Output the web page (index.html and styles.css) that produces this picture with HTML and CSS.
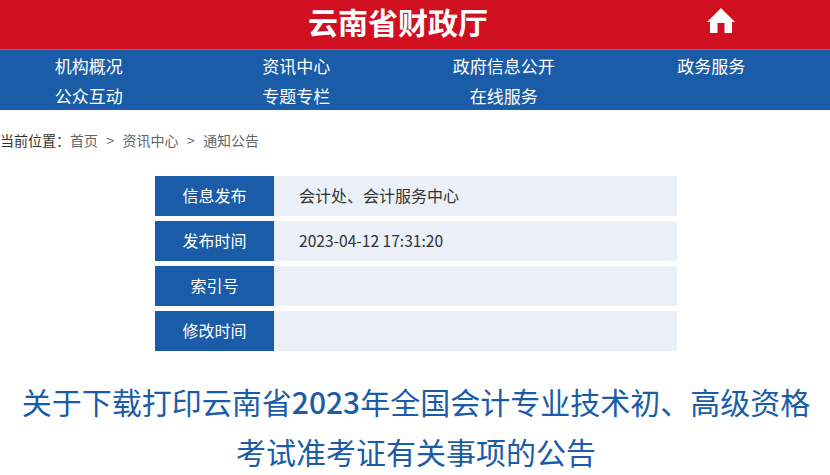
FILE: index.html
```html
<!DOCTYPE html>
<html lang="zh-CN">
<head>
<meta charset="utf-8">
<title>云南省财政厅</title>
<link rel="stylesheet" href="styles.css">
</head>
<body>
<header class="top">
  <div class="brand">云南省财政厅</div>
  <a class="home" href="#" aria-label="首页">
    <svg width="30" height="26" viewBox="0 0 30 26"><path fill="#fff" d="M15 0 L29 14 L26 14 L26 25 L18.5 25 L18.5 15 L11.5 15 L11.5 25 L4 25 L4 14 L1 14 Z"/></svg>
  </a>
</header>
<nav class="nav">
  <div class="nav-grid">
    <a href="#">机构概况</a>
    <a href="#">资讯中心</a>
    <a href="#">政府信息公开</a>
    <a href="#">政务服务</a>
    <a href="#">公众互动</a>
    <a href="#">专题专栏</a>
    <a href="#">在线服务</a>
  </div>
</nav>
<div class="crumbs">
  <span class="here">当前位置：</span><a href="#">首页</a><span class="sep">&gt;</span><a href="#">资讯中心</a><span class="sep">&gt;</span><a href="#">通知公告</a>
</div>
<section class="meta">
  <div class="row"><div class="label">信息发布</div><div class="value">会计处、会计服务中心</div></div>
  <div class="row"><div class="label">发布时间</div><div class="value time">2023-04-12 17:31:20</div></div>
  <div class="row"><div class="label">索引号</div><div class="value"></div></div>
  <div class="row"><div class="label">修改时间</div><div class="value"></div></div>
</section>
<h1 class="title">关于下载打印云南省<span class="num">2023</span>年全国会计专业技术初、高级资格<br>考试准考证有关事项的公告</h1>
</body>
</html>
```
FILE: styles.css
```css
* { box-sizing: border-box; }
html, body { margin: 0; padding: 0; background: #fff; overflow: hidden; }
body { font-family: "Noto Sans CJK SC", "Noto Sans", sans-serif; color: #333; }
a { color: inherit; text-decoration: none; }
.top {
  height: 49px;
  background: #d01020;
  display: flex;
  align-items: flex-start;
  padding-left: 308px;
}
.brand {
  color: #fff;
  font-size: 30px;
  font-weight: 700;
  line-height: 42px;
  white-space: nowrap;
}
.home { margin: 8px 0 0 218px; display: flex; }
.nav {
  height: 61px;
  background: #1a5ca8;
  border-top: 1px solid #3f78c4;
  overflow: hidden;
}
.nav-grid {
  width: 830px;
  margin-left: -15px;
  display: grid;
  grid-template-columns: repeat(4, 1fr);
  grid-auto-rows: 30px;
  color: #fff;
  font-size: 17px;
  text-align: center;
}
.nav a { line-height: 32px; }
.crumbs {
  height: 22px;
  margin-top: 20px;
  font-size: 14px;
  line-height: 20px;
  color: #666;
  white-space: nowrap;
}
.crumbs .here { color: #333; }
.crumbs .sep { margin: 0 8.4px; }
.meta {
  width: 522px;
  margin: 24px 0 0 155px;
  display: flex;
  flex-direction: column;
  gap: 5px;
}
.row { display: flex; height: 40px; background: #eaeff8; }
.label {
  width: 119px;
  background: #1a5ca8;
  color: #fff;
  font-size: 16px;
  line-height: 38px;
  text-align: center;
}
.value {
  padding-left: 25px;
  font-size: 16px;
  line-height: 38px;
  color: #333;
}
.time { font-size: 15.6px; }
.title {
  margin: 25px 0 0;
  padding-left: 2px;
  font-size: 30px;
  font-weight: 400;
  line-height: 50px;
  color: #1a5ca8;
  text-align: center;
  white-space: nowrap;
}
.num { font-weight: 500; }
```
